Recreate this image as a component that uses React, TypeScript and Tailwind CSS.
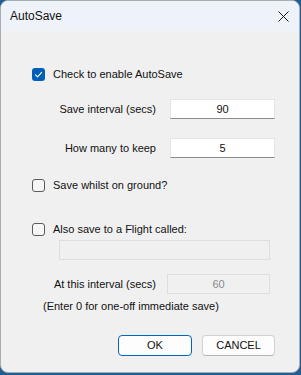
import React from 'react';

const font = { fontFamily: '"Liberation Sans", Arial, sans-serif' };

function CheckBox({ checked }: { checked?: boolean }) {
  if (checked) {
    return (
      <div className="w-[13px] h-[13px] rounded-[3px] bg-[#005fb8] flex items-center justify-center shrink-0">
        <svg width="9" height="9" viewBox="0 0 9 9" fill="none">
          <path d="M1.5 4.8 L3.6 6.8 L7.6 2.3" stroke="#ffffff" strokeWidth="1.1" strokeLinecap="round" strokeLinejoin="round" />
        </svg>
      </div>
    );
  }
  return <div className="w-[13px] h-[13px] rounded-[3px] border border-[#5c5c5c] bg-[#f6f6f6] shrink-0" />;
}

function CheckRow({ checked, label, className }: { checked?: boolean; label: string; className: string }) {
  return (
    <div className={`flex items-center h-[14px] pl-[31px] ${className}`}>
      <CheckBox checked={checked} />
      <span className="ml-[8px] text-[11px] text-[#111]">{label}</span>
    </div>
  );
}

export default function App() {
  return (
    <div className="w-[301px] h-[375px] bg-[#1f5d92] overflow-hidden" style={font}>
      <div className="w-[300px] h-[373px] rounded-[8px] border border-[#a9aeb3] bg-[#f0f0f0] overflow-hidden flex flex-col">
        {/* title bar */}
        <div className="h-[30px] bg-[#eef3f9] flex items-center justify-between pl-[9px] pr-[9px] shrink-0">
          <span className="text-[12px] text-[#111]">AutoSave</span>
          <svg width="11" height="11" viewBox="0 0 11 11" className="mr-[1px]">
            <path d="M0.5 0.5 L10.5 10.5 M10.5 0.5 L0.5 10.5" stroke="#1a1a1a" strokeWidth="1" />
          </svg>
        </div>

        <CheckRow checked label="Check to enable AutoSave" className="mt-[36px]" />

        <div className="flex items-center mt-[18px] h-[20px]">
          <div className="w-[155px] text-right text-[11px] text-[#111]">Save interval (secs)</div>
          <div className="ml-[14px] w-[105px] h-[20px] bg-white border border-[#e4e4e4] border-b-[#8c8c8c] flex items-center justify-center text-[11px] text-[#111]">
            90
          </div>
        </div>

        <div className="flex items-center mt-[19px] h-[20px]">
          <div className="w-[155px] text-right text-[11px] text-[#111]">How many to keep</div>
          <div className="ml-[14px] w-[105px] h-[20px] bg-white border border-[#e4e4e4] border-b-[#8c8c8c] flex items-center justify-center text-[11px] text-[#111]">
            5
          </div>
        </div>

        <CheckRow label="Save whilst on ground?" className="mt-[20px]" />
        <CheckRow label="Also save to a Flight called:" className="mt-[30px]" />

        <div className="ml-[58px] mt-[4px] w-[211px] h-[20px] bg-[#f0f0f0] border border-[#dedede]" />

        <div className="flex items-center mt-[14px] h-[20px]">
          <div className="w-[155px] text-right text-[11px] text-[#111]">At this interval (secs)</div>
          <div className="ml-[11px] w-[103px] h-[20px] bg-[#f0f0f0] border border-[#dedede] flex items-center justify-center text-[11px] text-[#8a8a8a]">
            60
          </div>
        </div>

        <div className="mt-[5px] h-[14px] pl-[42px] text-[11px] text-[#111] leading-[14px]">
          (Enter 0 for one-off immediate save)
        </div>

        <div className="flex mt-[22px] pl-[117px] gap-[10px]">
          <button className="w-[74px] h-[21px] rounded-[4px] bg-[#fdfdfd] border border-[#0067c0] text-[11px] text-[#111] flex items-center justify-center">
            OK
          </button>
          <button className="w-[73px] h-[21px] rounded-[4px] bg-[#fdfdfd] border border-[#d1d1d1] border-b-[#b5b5b5] text-[11px] text-[#111] flex items-center justify-center">
            CANCEL
          </button>
        </div>
      </div>
    </div>
  );
}
